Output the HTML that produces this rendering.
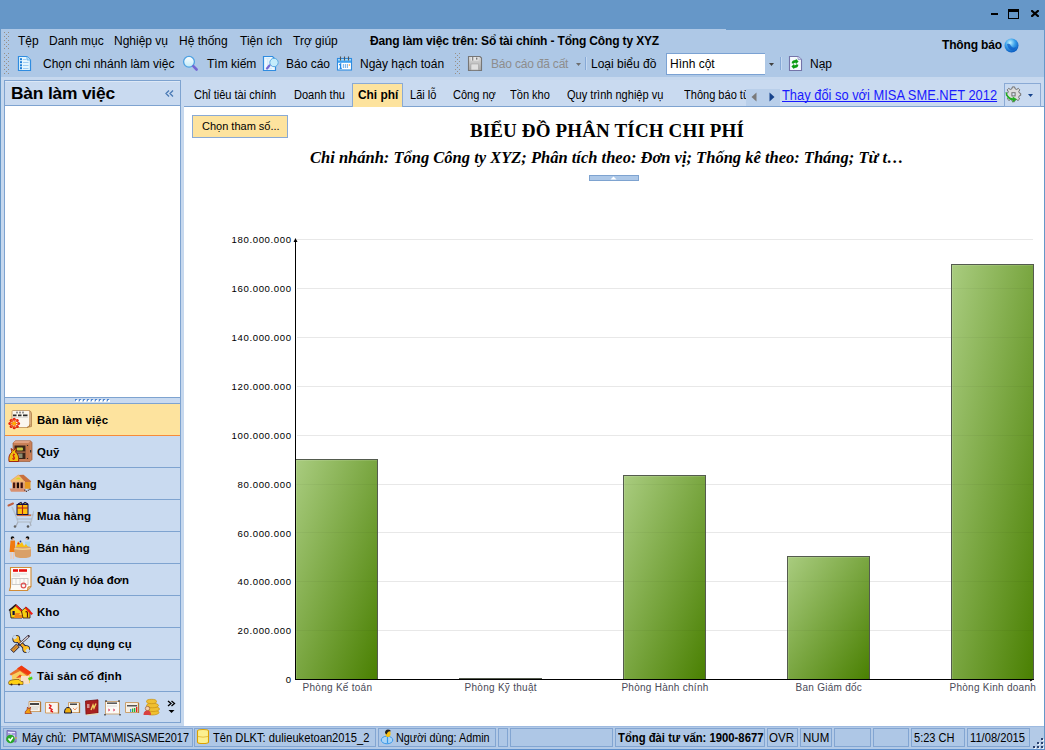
<!DOCTYPE html>
<html><head><meta charset="utf-8">
<style>
*{margin:0;padding:0;box-sizing:border-box}
html,body{width:1045px;height:750px;overflow:hidden;background:#6697c8;font-family:"Liberation Sans",sans-serif;color:#000}
.a{position:absolute;white-space:nowrap}
.t12{font-size:12px;line-height:14px}
.t11{font-size:11px;line-height:13px}
.b{font-weight:bold}
.nav{font-size:11.4px;line-height:13px;letter-spacing:0.12px;color:#000;margin-top:1px}
.ylab{font-size:9.6px;line-height:11px;letter-spacing:0.62px;color:#000}
.xlab{font-size:10px;line-height:12px;letter-spacing:0.27px;color:#4a4a58}
.bar{background:linear-gradient(to bottom right,#a9cc7f,#4a8002);border:1px solid #545b4e;box-shadow:inset 1px 1px 0 rgba(255,255,255,0.12)}
.sp{border:1px solid #82a5d2;background:#aec7e6}
.tab{font-size:12px;line-height:14px;top:88px;transform:scaleX(0.92);transform-origin:0 0}
</style></head><body>
<div class="a" style="left:0;top:0;width:1045px;height:750px;overflow:hidden">

<!-- title bar -->
<div class="a" style="left:0;top:0;width:1045px;height:30px;background:#6697c8"></div>
<div class="a" style="left:991px;top:13px;width:7px;height:2px;background:#000"></div>
<div class="a" style="left:1008px;top:9px;width:11px;height:10px;border:1px solid #000;border-top-width:3px"></div>
<svg class="a" style="left:1031px;top:10px" width="8" height="7" viewBox="0 0 8 7"><path d="M1.1 1 L6.9 6 M6.9 1 L1.1 6" stroke="#000" stroke-width="2.2" stroke-linecap="square"/></svg>

<!-- app frame -->
<div class="a" style="left:1px;top:29px;width:1043px;height:721px;background:#c6d8ee"></div>

<!-- menu/toolbar area -->
<div class="a" style="left:1px;top:29px;width:1043px;height:48px;background:#aec8e6"></div>

<!-- menu row -->
<div class="a" style="left:726px;top:29px;width:318px;height:1px;background:#6697c8"></div>
<svg class="a" style="left:0;top:0" width="12" height="80" viewBox="0 0 12 80"><g fill="#988f85"><rect x="4" y="32" width="1" height="1"/><rect x="8" y="32" width="1" height="1"/><rect x="4" y="36" width="1" height="1"/><rect x="8" y="36" width="1" height="1"/><rect x="4" y="40" width="1" height="1"/><rect x="8" y="40" width="1" height="1"/><rect x="4" y="44" width="1" height="1"/><rect x="8" y="44" width="1" height="1"/><rect x="4" y="48" width="1" height="1"/><rect x="8" y="48" width="1" height="1"/><rect x="4" y="53" width="1" height="1"/><rect x="8" y="53" width="1" height="1"/><rect x="4" y="57" width="1" height="1"/><rect x="8" y="57" width="1" height="1"/><rect x="4" y="61" width="1" height="1"/><rect x="8" y="61" width="1" height="1"/><rect x="4" y="65" width="1" height="1"/><rect x="8" y="65" width="1" height="1"/><rect x="4" y="69" width="1" height="1"/><rect x="8" y="69" width="1" height="1"/><rect x="4" y="73" width="1" height="1"/><rect x="8" y="73" width="1" height="1"/><rect x="6" y="34" width="1" height="1"/><rect x="6" y="38" width="1" height="1"/><rect x="6" y="42" width="1" height="1"/><rect x="6" y="46" width="1" height="1"/><rect x="6" y="55" width="1" height="1"/><rect x="6" y="59" width="1" height="1"/><rect x="6" y="63" width="1" height="1"/><rect x="6" y="67" width="1" height="1"/><rect x="6" y="71" width="1" height="1"/></g></svg>
<div class="a t12" style="left:18px;top:34px">Tệp</div>
<div class="a t12" style="left:49px;top:34px">Danh mục</div>
<div class="a t12" style="left:114px;top:34px">Nghiệp vụ</div>
<div class="a t12" style="left:179px;top:34px">Hệ thống</div>
<div class="a t12" style="left:240px;top:34px">Tiện ích</div>
<div class="a t12" style="left:293px;top:34px">Trợ giúp</div>
<div class="a t12 b" style="left:370px;top:34px;letter-spacing:-0.15px">Đang làm việc trên: Sổ tài chính - Tổng Công ty XYZ</div>
<div class="a t12 b" style="left:942px;top:38px;letter-spacing:-0.15px">Thông báo</div>
<svg class="a" style="left:1004px;top:38px" width="15" height="15" viewBox="0 0 15 15">
<defs><radialGradient id="gl" cx="0.4" cy="0.3" r="0.7"><stop offset="0" stop-color="#bff0ff"/><stop offset="0.5" stop-color="#3aa0ea"/><stop offset="1" stop-color="#0a5cc0"/></radialGradient></defs>
<circle cx="7.5" cy="7.5" r="7" fill="url(#gl)"/><path d="M3 6 Q6 5 7 8 Q9 11 12 9 Q11 13 7 12 Q4 11 3 6Z" fill="#1060c8" opacity="0.8"/></svg>

<!-- toolbar row -->
<div class="a t12" style="left:43px;top:57px">Chọn chi nhánh làm việc</div>
<div class="a t12" style="left:207px;top:57px">Tìm kiếm</div>
<div class="a t12" style="left:286px;top:57px">Báo cáo</div>
<div class="a t12" style="left:360px;top:57px">Ngày hạch toán</div>
<div class="a t12" style="left:491px;top:57px;color:#8d8d8d;letter-spacing:-0.2px">Báo cáo đã cất</div>
<div class="a t12" style="left:591px;top:57px">Loại biểu đồ</div>
<div class="a" style="left:666px;top:53px;width:99px;height:22px;background:#fff;border:1px solid #7ba2d3;border-right:none"></div>
<div class="a t12" style="left:670px;top:57px">Hình cột</div>
<div class="a t12" style="left:810px;top:57px">Nạp</div>
<svg class="a" style="left:576px;top:63px" width="6" height="3" viewBox="0 0 6 3"><path d="M0 0H5L2.5 3Z" fill="#6d6d6d"/></svg>
<svg class="a" style="left:769px;top:63px" width="6" height="3" viewBox="0 0 6 3"><path d="M0 0H5L2.5 3Z" fill="#404040"/></svg>
<div class="a" style="left:585px;top:57px;width:1px;height:13px;background:#86a9d6"></div><div class="a" style="left:586px;top:57px;width:1px;height:13px;background:#c4d8f0"></div>
<div class="a" style="left:780px;top:57px;width:1px;height:13px;background:#86a9d6"></div><div class="a" style="left:781px;top:57px;width:1px;height:13px;background:#c4d8f0"></div>
<svg class="a" style="left:455px;top:53px" width="5" height="21" viewBox="0 0 5 21"><g fill="#988f85"><rect x="0" y="0" width="1" height="1"/><rect x="4" y="0" width="1" height="1"/><rect x="0" y="4" width="1" height="1"/><rect x="4" y="4" width="1" height="1"/><rect x="0" y="8" width="1" height="1"/><rect x="4" y="8" width="1" height="1"/><rect x="0" y="12" width="1" height="1"/><rect x="4" y="12" width="1" height="1"/><rect x="0" y="16" width="1" height="1"/><rect x="4" y="16" width="1" height="1"/><rect x="0" y="20" width="1" height="1"/><rect x="4" y="20" width="1" height="1"/><rect x="2" y="2" width="1" height="1"/><rect x="2" y="6" width="1" height="1"/><rect x="2" y="10" width="1" height="1"/><rect x="2" y="14" width="1" height="1"/><rect x="2" y="18" width="1" height="1"/></g></svg>

<!-- left panel -->
<div class="a" style="left:4px;top:80px;width:177px;height:643px;border:1px solid #7ea3d0;background:#c9daf0"></div>
<div class="a" style="left:5px;top:81px;width:175px;height:1px;background:#dde8f6"></div>
<div class="a b" style="left:11px;top:83px;font-size:17.4px;line-height:20px;letter-spacing:-0.2px">Bàn làm việc</div>
<svg class="a" style="left:165px;top:90px" width="9" height="7" viewBox="0 0 9 7"><path d="M4 0.5L1 3.5L4 6.5M8 0.5L5 3.5L8 6.5" fill="none" stroke="#4a7ab5" stroke-width="1.3"/></svg>
<div class="a" style="left:5px;top:105px;width:175px;height:1px;background:#7ea3d0"></div>
<div class="a" style="left:5px;top:106px;width:175px;height:291px;background:#fff"></div>
<div class="a" style="left:5px;top:397px;width:175px;height:1px;background:#7ea3d0"></div>
<svg class="a" style="left:75px;top:399px" width="38" height="3" viewBox="0 0 38 3"><g fill="#ffffff"><rect x="1" y="1" width="2" height="2"/><rect x="5" y="1" width="2" height="2"/><rect x="9" y="1" width="2" height="2"/><rect x="13" y="1" width="2" height="2"/><rect x="17" y="1" width="2" height="2"/><rect x="21" y="1" width="2" height="2"/><rect x="25" y="1" width="2" height="2"/><rect x="29" y="1" width="2" height="2"/><rect x="33" y="1" width="2" height="2"/></g><g fill="#4f86d0"><path d="M0 0H2V1H1V2H0Z"/><path d="M4 0H6V1H5V2H4Z"/><path d="M8 0H10V1H9V2H8Z"/><path d="M12 0H14V1H13V2H12Z"/><path d="M16 0H18V1H17V2H16Z"/><path d="M20 0H22V1H21V2H20Z"/><path d="M24 0H26V1H25V2H24Z"/><path d="M28 0H30V1H29V2H28Z"/><path d="M32 0H34V1H33V2H32Z"/></g></svg>
<div class="a" style="left:5px;top:403px;width:175px;height:1px;background:#7ea3d0"></div>
<div class="a" style="left:5px;top:404px;width:175px;height:31px;background:#fde39e"></div>
<div class="a" style="left:5px;top:435px;width:175px;height:1px;background:#f68b3a"></div>
<div class="a" style="left:5px;top:467px;width:175px;height:1px;background:#7ea3d0"></div>
<div class="a" style="left:5px;top:499px;width:175px;height:1px;background:#7ea3d0"></div>
<div class="a" style="left:5px;top:531px;width:175px;height:1px;background:#7ea3d0"></div>
<div class="a" style="left:5px;top:563px;width:175px;height:1px;background:#7ea3d0"></div>
<div class="a" style="left:5px;top:595px;width:175px;height:1px;background:#7ea3d0"></div>
<div class="a" style="left:5px;top:627px;width:175px;height:1px;background:#7ea3d0"></div>
<div class="a" style="left:5px;top:659px;width:175px;height:1px;background:#7ea3d0"></div>
<div class="a" style="left:5px;top:691px;width:175px;height:1px;background:#7ea3d0"></div>
<div class="a b nav" style="left:37px;top:413px">Bàn làm việc</div>
<div class="a b nav" style="left:37px;top:445px">Quỹ</div>
<div class="a b nav" style="left:37px;top:477px">Ngân hàng</div>
<div class="a b nav" style="left:37px;top:509px">Mua hàng</div>
<div class="a b nav" style="left:37px;top:541px">Bán hàng</div>
<div class="a b nav" style="left:37px;top:573px">Quản lý hóa đơn</div>
<div class="a b nav" style="left:37px;top:605px">Kho</div>
<div class="a b nav" style="left:37px;top:637px">Công cụ dụng cụ</div>
<div class="a b nav" style="left:37px;top:669px">Tài sản cố định</div>

<!-- tabs strip -->
<div class="a" style="left:181px;top:80px;width:863px;height:27px;background:#c9daf0"></div>
<div class="a" style="left:184px;top:106px;width:860px;height:1px;background:#7ea3d0"></div>
<div class="a" style="left:184px;top:107px;width:860px;height:619px;background:#fff"></div>
<div class="a" style="left:1044px;top:29px;width:1px;height:721px;background:#6697c8"></div>
<div class="a" style="left:352px;top:83px;width:51px;height:24px;background:#fde39e;border:1px solid #8aaad5;border-bottom:none"></div>
<div class="a tab" style="left:194px">Chỉ tiêu tài chính</div>
<div class="a tab" style="left:294px">Doanh thu</div>
<div class="a tab b" style="left:358px;transform:scaleX(0.99)">Chi phí</div>
<div class="a tab" style="left:410px">Lãi lỗ</div>
<div class="a tab" style="left:453px">Công nợ</div>
<div class="a tab" style="left:510px">Tồn kho</div>
<div class="a tab" style="left:567px">Quy trình nghiệp vụ</div>
<div class="a" style="left:683px;top:86px;width:63px;height:18px;overflow:hidden"><div class="a tab" style="left:1px;top:2px">Thông báo từ MISA</div></div>
<div class="a" style="left:746px;top:89px;width:34px;height:17px;background:#b9cfea"></div>
<svg class="a" style="left:751px;top:92px" width="6" height="10" viewBox="0 0 6 10"><path d="M5.5 0.5V9.5L0.5 5Z" fill="#7a7a7a"/></svg>
<svg class="a" style="left:769px;top:92px" width="6" height="10" viewBox="0 0 6 10"><path d="M0.5 0.5V9.5L5.5 5Z" fill="#15428b"/></svg>
<div class="a" style="left:782px;top:87px;font-size:14px;line-height:16px;color:#1a1aff;text-decoration:underline;text-decoration-skip-ink:none;transform:scaleX(0.92);transform-origin:0 0">Thay đổi so với MISA SME.NET 2012</div>
<div class="a" style="left:1004px;top:83px;width:37px;height:24px;border:1px solid #8aaad5;background:#c9daf0"></div>
<svg class="a" style="left:1028px;top:94px" width="6" height="3" viewBox="0 0 6 3"><path d="M0 0H5L2.5 3Z" fill="#15428b"/></svg>

<!-- status bar -->
<div class="a" style="left:1px;top:726px;width:1043px;height:24px;background:#b3cae7;border-top:1px solid #9ebae0"></div>
<div class="a" style="left:0;top:749px;width:1045px;height:1px;background:#5d8fcc"></div>

<!-- content -->
<div class="a" style="left:192px;top:115px;width:96px;height:23px;background:#fde39e;border:1px solid #8aaad5"></div>
<div class="a t11" style="left:202px;top:120px">Chọn tham số...</div>
<div class="a b" style="left:469px;top:121px;font-family:'Liberation Serif',serif;font-size:19px;line-height:20px;width:276px;text-align:center;letter-spacing:0.15px">BIỂU ĐỒ PHÂN TÍCH CHI PHÍ</div>
<div class="a b" style="left:310px;top:147.5px;font-family:'Liberation Serif',serif;font-style:italic;font-size:16.5px;line-height:20px">Chi nhánh: Tổng Công ty XYZ; Phân tích theo: Đơn vị; Thống kê theo: Tháng; Từ t…</div>
<div class="a" style="left:589px;top:175px;width:50px;height:6px;background:#adc8e8;border:1px solid #7ea3d0"></div>
<svg class="a" style="left:610px;top:176px" width="7" height="4" viewBox="0 0 7 4"><path d="M0.5 3.5L3.5 0.5L6.5 3.5Z" fill="#fff"/></svg>
<!--CHART-->
<div class="a" style="left:297px;top:630px;width:736px;height:1px;background:#e8e8e8"></div>
<div class="a" style="left:297px;top:581px;width:736px;height:1px;background:#e8e8e8"></div>
<div class="a" style="left:297px;top:532px;width:736px;height:1px;background:#e8e8e8"></div>
<div class="a" style="left:297px;top:484px;width:736px;height:1px;background:#e8e8e8"></div>
<div class="a" style="left:297px;top:435px;width:736px;height:1px;background:#e8e8e8"></div>
<div class="a" style="left:297px;top:386px;width:736px;height:1px;background:#e8e8e8"></div>
<div class="a" style="left:297px;top:337px;width:736px;height:1px;background:#e8e8e8"></div>
<div class="a" style="left:297px;top:288px;width:736px;height:1px;background:#e8e8e8"></div>
<div class="a" style="left:297px;top:239px;width:736px;height:1px;background:#e8e8e8"></div>
<div class="a ylab" style="right:753.3px;top:674.0px">0</div>
<div class="a ylab" style="right:753.3px;top:625.2px">20.000.000</div>
<div class="a ylab" style="right:753.3px;top:576.3px">40.000.000</div>
<div class="a ylab" style="right:753.3px;top:527.5px">60.000.000</div>
<div class="a ylab" style="right:753.3px;top:478.6px">80.000.000</div>
<div class="a ylab" style="right:753.3px;top:429.8px">100.000.000</div>
<div class="a ylab" style="right:753.3px;top:380.9px">120.000.000</div>
<div class="a ylab" style="right:753.3px;top:332.1px">140.000.000</div>
<div class="a ylab" style="right:753.3px;top:283.2px">160.000.000</div>
<div class="a ylab" style="right:753.3px;top:234.4px">180.000.000</div>
<div class="a bar" style="left:295px;top:459px;width:83px;height:221px"></div>
<div class="a bar" style="left:459px;top:678px;width:83px;height:2px"></div>
<div class="a bar" style="left:623px;top:475px;width:83px;height:205px"></div>
<div class="a bar" style="left:787px;top:556px;width:83px;height:124px"></div>
<div class="a bar" style="left:951px;top:264px;width:83px;height:416px"></div>
<div class="a" style="left:296px;top:630px;width:81px;height:1px;background:rgba(0,0,0,0.035)"></div>
<div class="a" style="left:624px;top:630px;width:81px;height:1px;background:rgba(0,0,0,0.035)"></div>
<div class="a" style="left:788px;top:630px;width:81px;height:1px;background:rgba(0,0,0,0.035)"></div>
<div class="a" style="left:952px;top:630px;width:81px;height:1px;background:rgba(0,0,0,0.035)"></div>
<div class="a" style="left:296px;top:581px;width:81px;height:1px;background:rgba(0,0,0,0.035)"></div>
<div class="a" style="left:624px;top:581px;width:81px;height:1px;background:rgba(0,0,0,0.035)"></div>
<div class="a" style="left:788px;top:581px;width:81px;height:1px;background:rgba(0,0,0,0.035)"></div>
<div class="a" style="left:952px;top:581px;width:81px;height:1px;background:rgba(0,0,0,0.035)"></div>
<div class="a" style="left:296px;top:532px;width:81px;height:1px;background:rgba(0,0,0,0.035)"></div>
<div class="a" style="left:624px;top:532px;width:81px;height:1px;background:rgba(0,0,0,0.035)"></div>
<div class="a" style="left:952px;top:532px;width:81px;height:1px;background:rgba(0,0,0,0.035)"></div>
<div class="a" style="left:296px;top:484px;width:81px;height:1px;background:rgba(0,0,0,0.035)"></div>
<div class="a" style="left:624px;top:484px;width:81px;height:1px;background:rgba(0,0,0,0.035)"></div>
<div class="a" style="left:952px;top:484px;width:81px;height:1px;background:rgba(0,0,0,0.035)"></div>
<div class="a" style="left:952px;top:435px;width:81px;height:1px;background:rgba(0,0,0,0.035)"></div>
<div class="a" style="left:952px;top:386px;width:81px;height:1px;background:rgba(0,0,0,0.035)"></div>
<div class="a" style="left:952px;top:337px;width:81px;height:1px;background:rgba(0,0,0,0.035)"></div>
<div class="a" style="left:952px;top:288px;width:81px;height:1px;background:rgba(0,0,0,0.035)"></div>
<div class="a" style="left:295px;top:240px;width:1px;height:440px;background:#000"></div>
<svg class="a" style="left:293px;top:238px" width="5" height="4" viewBox="0 0 5 4"><path d="M2.5 0L4.5 4H0.5Z" fill="#000"/></svg>
<div class="a" style="left:295px;top:679px;width:739px;height:1px;background:#000"></div>
<svg class="a" style="left:1029px;top:679px" width="6" height="4" viewBox="0 0 6 4"><path d="M0.5 0H4.8L1.5 2.6Z" fill="#000"/></svg>
<div class="a xlab" style="left:302.6px;top:682px">Phòng Kế toán</div>
<div class="a xlab" style="left:464.6px;top:682px">Phòng Kỹ thuật</div>
<div class="a xlab" style="left:621.4px;top:682px">Phòng Hành chính</div>
<div class="a xlab" style="left:795.5px;top:682px">Ban Giám đốc</div>
<div class="a xlab" style="left:949.5px;top:682px">Phòng Kinh doanh</div>
<!--/CHART-->
<!-- status panels -->
<div class="a sp" style="left:3px;top:728px;width:190px;height:19px"></div>
<div class="a sp" style="left:194px;top:728px;width:182px;height:19px"></div>
<div class="a sp" style="left:378px;top:728px;width:118px;height:19px"></div>
<div class="a sp" style="left:498px;top:728px;width:10px;height:19px"></div>
<div class="a sp" style="left:510px;top:728px;width:103px;height:19px"></div>
<div class="a sp" style="left:615px;top:728px;width:150px;height:19px"></div>
<div class="a sp" style="left:767px;top:728px;width:31px;height:19px"></div>
<div class="a sp" style="left:800px;top:728px;width:32px;height:19px"></div>
<div class="a sp" style="left:834px;top:728px;width:37px;height:19px"></div>
<div class="a sp" style="left:873px;top:728px;width:36px;height:19px"></div>
<div class="a sp" style="left:911px;top:728px;width:54px;height:19px"></div>
<div class="a sp" style="left:967px;top:728px;width:63px;height:19px"></div>
<div class="a t11" style="left:22px;top:731px;font-size:12px;line-height:14px;transform:scaleX(0.912);transform-origin:0 0">Máy chủ:&nbsp; PMTAM\MISASME2017</div>
<div class="a t11" style="left:213px;top:731px;font-size:12px;line-height:14px;transform:scaleX(0.93);transform-origin:0 0">Tên DLKT: dulieuketoan2015_2</div>
<div class="a t11" style="left:396px;top:731px;font-size:12px;line-height:14px;transform:scaleX(0.9);transform-origin:0 0">Người dùng: Admin</div>
<div class="a t11 b" style="left:618px;top:731px;font-size:12px;line-height:14px;transform:scaleX(0.94);transform-origin:0 0">Tổng đài tư vấn: 1900-8677</div>
<div class="a t11" style="left:769px;top:731px;font-size:12px;line-height:14px;transform:scaleX(0.96);transform-origin:0 0">OVR</div>
<div class="a t11" style="left:803px;top:731px;font-size:12px;line-height:14px;transform:scaleX(0.96);transform-origin:0 0">NUM</div>
<div class="a t11" style="left:914px;top:731px;font-size:12px;line-height:14px;transform:scaleX(0.92);transform-origin:0 0">5:23 CH</div>
<div class="a t11" style="left:970px;top:731px;font-size:12px;line-height:14px;transform:scaleX(0.93);transform-origin:0 0">11/08/2015</div>

<svg class="a" style="left:1032px;top:737px" width="12" height="12" viewBox="0 0 12 12"><g fill="#fff" opacity="0.7"><rect x="10" y="2" width="2" height="2"/><rect x="6" y="6" width="2" height="2"/><rect x="10" y="6" width="2" height="2"/><rect x="2" y="10" width="2" height="2"/><rect x="6" y="10" width="2" height="2"/><rect x="10" y="10" width="2" height="2"/></g><g fill="#2c4270"><rect x="9" y="1" width="2" height="2"/><rect x="5" y="5" width="2" height="2"/><rect x="9" y="5" width="2" height="2"/><rect x="1" y="9" width="2" height="2"/><rect x="5" y="9" width="2" height="2"/><rect x="9" y="9" width="2" height="2"/></g></svg>
<!--ICONS-->
<svg class="a" style="left:17px;top:55px" width="15" height="17" viewBox="0 0 15 17"><path d="M1.5 1.5H10L13.5 5V15.5H1.5Z" fill="#e4f6fe" stroke="#2f8ce0" stroke-width="1.2"/>
<path d="M10 1.5V5H13.5" fill="#bfe6fa" stroke="#58a8e8" stroke-width="0.8"/>
<rect x="3" y="3.2" width="2" height="2" fill="#1f7fd8"/><rect x="3" y="6.2" width="2" height="2" fill="#1f7fd8"/>
<rect x="3" y="9.3" width="2" height="2" fill="#1f7fd8"/><rect x="3" y="12.2" width="2" height="2" fill="#1f7fd8"/>
<rect x="6" y="4" width="3" height="0.8" fill="#8cc4f0"/><rect x="6" y="7" width="5.5" height="0.8" fill="#8cc4f0"/>
<rect x="6" y="10.2" width="5.5" height="0.8" fill="#8cc4f0"/><rect x="6" y="13" width="5.5" height="0.8" fill="#8cc4f0"/></svg>
<svg class="a" style="left:182px;top:55px" width="17" height="17" viewBox="0 0 17 17"><defs><linearGradient id="sg" x1="0" y1="0" x2="0" y2="1"><stop offset="0" stop-color="#ffffff"/><stop offset="1" stop-color="#bfeaf8"/></linearGradient></defs>
<circle cx="7" cy="6.8" r="5.4" fill="url(#sg)" stroke="#4ea2e2" stroke-width="1.3"/>
<path d="M11.3 11.2L14.6 14.5" stroke="#7466d4" stroke-width="2.6" stroke-linecap="round"/></svg>
<svg class="a" style="left:262px;top:55px" width="18" height="17" viewBox="0 0 18 17"><path d="M1.5 1.5H10.5L13.5 4.5V15.5H1.5Z" fill="#eef8fe" stroke="#2f8ce0" stroke-width="1.2"/>
<path d="M3.5 3.5H8M5.7 3.5V13.5M3.5 13.5H10" stroke="#d6ecfb" stroke-width="1.5"/>
<circle cx="12" cy="7.5" r="4.2" fill="#c4ecfb" stroke="#5aa8e0" stroke-width="1"/>
<path d="M7.5 10.5L5 13.5" stroke="#7466d4" stroke-width="2.2" stroke-linecap="round"/></svg>
<svg class="a" style="left:336px;top:56px" width="17" height="15" viewBox="0 0 17 15"><rect x="1.5" y="2.5" width="14" height="11.5" fill="#ffffff" stroke="#2f8ce0" stroke-width="1.1"/>
<rect x="2" y="3" width="13" height="3.8" fill="#3da0f0"/><rect x="2" y="3" width="13" height="1.5" fill="#a8dcfc"/>
<path d="M4.5 0.5V4.5M8.5 0.5V4.5M12.5 0.5V4.5" stroke="#555" stroke-width="1.1"/>
<path d="M3.2 9L4.6 8V12.3M3.5 12.3H5.8" stroke="#1f88e8" stroke-width="1.3" fill="none"/>
<g fill="#3a8ee0"><circle cx="7.4" cy="9" r="0.7"/><circle cx="9.4" cy="9" r="0.7"/><circle cx="11.4" cy="9" r="0.7"/><circle cx="7.4" cy="11" r="0.7"/><circle cx="9.4" cy="11" r="0.7"/><circle cx="11.4" cy="11" r="0.7"/></g>
<circle cx="13.4" cy="9" r="0.8" fill="#f49a30"/></svg>
<svg class="a" style="left:467px;top:55px" width="16" height="17" viewBox="0 0 16 17"><defs><linearGradient id="fg" x1="0" y1="0" x2="0" y2="1"><stop offset="0" stop-color="#dcdcdc"/><stop offset="1" stop-color="#a8a8a8"/></linearGradient></defs>
<path d="M1.5 1.5H13L14.5 3V15.5H1.5Z" fill="url(#fg)" stroke="#767676" stroke-width="1.1"/>
<rect x="4" y="2" width="7.5" height="3.6" fill="#e6e6e6"/><rect x="5" y="2" width="1.3" height="3.6" fill="#8a8a8a"/><rect x="9" y="2.6" width="1.4" height="2" fill="#777"/>
<rect x="4" y="9" width="7.5" height="6" fill="#e0e0e0" stroke="#9a9a9a" stroke-width="0.5"/></svg>
<svg class="a" style="left:788px;top:55px" width="15" height="17" viewBox="0 0 15 17"><path d="M1.5 1.5H10L13.5 4.5V15.5H1.5Z" fill="#f6faff" stroke="#7474a8" stroke-width="1.1"/>
<path d="M10 1.5V4.5H13.5" fill="#d0d8f4" stroke="#9090c0" stroke-width="0.7"/>
<path d="M3.6 8.2Q4 4.8 7.8 4.9V3.8L10.6 6.6L7.8 9.2V7.8Q6 7.6 5.6 8.8Z" fill="#0c9c14"/>
<path d="M10.4 9.8Q10 13.2 6.2 13.1V14.2L3.4 11.4L6.2 8.8V10.2Q8 10.4 8.4 9.2Z" fill="#0c9c14"/></svg>
<svg class="a" style="left:1004px;top:85px" width="20" height="18" viewBox="0 0 20 18"><g transform="translate(9.5,9.3)"><path d="M-1.3 -7.2H1.3L1.7 -5.2L3.6 -4.4L5.3 -5.6L7 -3.9L5.8 -2.2L6.6 -0.3L8 0V2.3L6.4 2.6L5.7 4.5L6.8 6.2L5 7.9L3.4 6.8L1.4 7.6L1.1 9.3H-1.2L-1.5 7.6L-3.5 6.8L-5 7.9L-6.8 6.2L-5.7 4.5L-6.5 2.6L-8 2.3V0L-6.5 -0.3L-5.8 -2.2L-7 -3.9L-5.3 -5.6L-3.6 -4.4L-1.7 -5.2Z" transform="scale(0.9) translate(0,-1)" fill="#dcdcdc" stroke="#6e6e6e" stroke-width="1.1"/>
<rect x="-1.6" y="-1.6" width="3.2" height="3.2" fill="#dbe8f8" stroke="#707070" stroke-width="1"/></g>
<path d="M1.5 7Q1.8 14 9 15.5L8.3 17.5L13 14.3L8.6 11.5L8.8 13.3Q4 12.5 2.6 7.2Z" fill="#22b022"/></svg>
<svg class="a" style="left:6px;top:405px" width="28" height="28" viewBox="0 0 28 28"><path d="M6 6.5Q6 5.5 7 5.5H23L24.5 7V21L21 22.5H9L6 21Z" fill="#fbf6ee" stroke="#c9a06a" stroke-width="1"/>
<path d="M23 5.5Q25.5 6 25.5 9V21.5L23 22" fill="#d8b080" stroke="#b0804a" stroke-width="0.8"/>
<path d="M7 10.3H10.5M12 10.3H15.5M17 10.3H21.5" stroke="#2a2a2a" stroke-width="1.8"/><path d="M10 7.8H12M13 7.8H15M16 7.8H18" stroke="#666" stroke-width="1"/><rect x="7" y="12.3" width="15" height="0.6" fill="#ccc"/><path d="M21 22.5Q23.5 22 24 19.5" stroke="#b07838" stroke-width="1.2" fill="none"/>
<path d="M11 5V7.5M14 5V7.5M17 5V7.5" stroke="#999" stroke-width="0.8"/>
<g fill="#e41c0c"><circle cx="12.50" cy="18.50" r="1.55"/><circle cx="11.24" cy="21.54" r="1.55"/><circle cx="8.20" cy="22.80" r="1.55"/><circle cx="5.16" cy="21.54" r="1.55"/><circle cx="3.90" cy="18.50" r="1.55"/><circle cx="5.16" cy="15.46" r="1.55"/><circle cx="8.20" cy="14.20" r="1.55"/><circle cx="11.24" cy="15.46" r="1.55"/></g><path d="M8.20 18.50L12.50 18.50 M8.20 18.50L11.24 21.54 M8.20 18.50L8.20 22.80 M8.20 18.50L5.16 21.54 M8.20 18.50L3.90 18.50 M8.20 18.50L5.16 15.46 M8.20 18.50L8.20 14.20 M8.20 18.50L11.24 15.46" stroke="#f46a20" stroke-width="1.1"/><circle cx="8.2" cy="18.5" r="1.8" fill="#ffb000"/></svg>
<svg class="a" style="left:6px;top:437px" width="28" height="28" viewBox="0 0 28 28"><path d="M7 6L9.5 3.8H24.5L26 5.5V22.5L24 24.5H7.5Z" fill="#c98058" stroke="#9a5a38" stroke-width="0.7"/>
<path d="M7 6L9.5 3.8H24.5L22.5 6Z" fill="#e0a080"/>
<rect x="8.5" y="8.5" width="11" height="13.5" fill="#3a2418"/>
<rect x="8.5" y="14.5" width="11" height="1.2" fill="#c07850"/>
<rect x="10.5" y="10.5" width="6.5" height="3" rx="1" fill="#c8c840"/><rect x="11.5" y="16.5" width="5" height="4.5" fill="#8a8a70"/>
<rect x="20" y="7.5" width="3.5" height="15" fill="#c27448"/><circle cx="21.5" cy="8.5" r="0.6" fill="#222"/><circle cx="21.5" cy="21.5" r="0.6" fill="#222"/><rect x="24" y="13" width="1.2" height="2.5" fill="#333"/>
<path d="M5 11.5L7.5 13.5L10.5 11L9.5 15Q13.5 18 12.5 24.5H3Q2 18 6 15Z" fill="#f0c010" stroke="#9a1a08" stroke-width="0.9"/>
<path d="M9 17.5Q6.5 17 7 19Q9.5 20 8.5 22Q7 22.5 6 21.5M7.7 16.5V23" stroke="#d02010" stroke-width="0.9" fill="none"/></svg>
<svg class="a" style="left:6px;top:469px" width="28" height="28" viewBox="0 0 28 28"><path d="M12.5 6L17.5 5.8L25.2 12.3L24.5 13.2H19Z" fill="#c8703e"/>
<path d="M4.8 11.6L12.5 5.8L19 13.2H5.5Z" fill="#f4c070" stroke="#e8a060" stroke-width="0.6"/>
<path d="M9.5 10.2Q12.5 7 15 10.2Z" fill="#d8d820"/>
<rect x="19" y="13" width="5.5" height="6.8" fill="#e89a20"/>
<rect x="5.5" y="12.2" width="13.5" height="1.3" fill="#f0b478"/>
<rect x="6" y="13.5" width="13" height="6.2" fill="#e0a070"/>
<rect x="7" y="13.5" width="2.2" height="5.8" fill="#4a1a10"/><rect x="10.8" y="13.5" width="2.2" height="5.8" fill="#1a0808"/><rect x="14.6" y="13.5" width="2.2" height="5.8" fill="#3a1010"/>
<path d="M3.5 19.5H18.5L20 22.8H5Z" fill="#d89070"/>
<path d="M18.5 20.8L20.5 22.3L22.5 21L24.5 20.2" stroke="#3a2020" stroke-width="1.3" stroke-dasharray="1 1" fill="none"/></svg>
<svg class="a" style="left:6px;top:501px" width="28" height="28" viewBox="0 0 28 28"><path d="M2.5 4.5L7 2.5" stroke="#c06040" stroke-width="2" stroke-linecap="round"/>
<path d="M6 6L10 15L12 21H25L28 10" stroke="#b8c4d0" stroke-width="1.6" fill="none"/>
<path d="M9 14H27M11 18H26M12 21L10 25M24 21L25 25" stroke="#a8b0bc" stroke-width="1.2" fill="none"/>
<rect x="11" y="13.5" width="14" height="1.6" fill="#d07040"/>
<rect x="11" y="3.5" width="11" height="10" fill="#ffc010" stroke="#10104a" stroke-width="1"/>
<path d="M16.5 3.5V13.5M11 7H22" stroke="#b02010" stroke-width="1.1"/>
<path d="M12 3L15 1.5L16.5 3.5L19 1.5L22 3" stroke="#10104a" stroke-width="1.2" fill="#f0d020"/>
<circle cx="9" cy="25.5" r="1.3" fill="#666"/><circle cx="22" cy="25.5" r="1.3" fill="#555"/></svg>
<svg class="a" style="left:6px;top:533px" width="28" height="28" viewBox="0 0 28 28"><circle cx="6.5" cy="5" r="1.8" fill="#111"/><circle cx="7.2" cy="6" r="1" fill="#f4c8b0"/><circle cx="21.5" cy="5" r="1.8" fill="#111"/><circle cx="20.8" cy="6" r="1" fill="#f4c8b0"/>
<path d="M4.5 7.5H9L9.5 19H3.5Z" fill="#f07a10"/>
<path d="M5 19V26M7.5 19V26" stroke="#f0c8b0" stroke-width="1.2"/>
<path d="M19 8.5H24L24 15H19Z" fill="#a8d4ec"/><rect x="19" y="14" width="4.5" height="2.5" fill="#222"/>
<path d="M8 16Q9 13 18 13Q26 13 25 16V23Q24 25 17 25Q10 25 9 23Z" fill="#d9a068"/>
<path d="M8.5 15.5Q17 17 25 15.5" stroke="#f0d090" stroke-width="1.6" fill="none"/>
<path d="M10 14L12 8L14 11L16 9L18 13L20 11L22 14Z" fill="#f8c010"/>
<circle cx="12.5" cy="10.5" r="1" fill="#d02020"/><circle cx="14.5" cy="8.5" r="0.9" fill="#2a3a8a"/></svg>
<svg class="a" style="left:6px;top:565px" width="28" height="28" viewBox="0 0 28 28"><path d="M4.5 2.5H25V21.5L21.5 25.5H3.5L4.5 22Z" fill="#fdfbf6" stroke="#d08c38" stroke-width="1.1"/>
<rect x="7" y="4.2" width="5" height="2.6" fill="#e81010"/><rect x="13" y="4.2" width="8" height="2.6" fill="#e81010"/>
<path d="M6.5 9H21M6.5 11H14" stroke="#c8c8c8" stroke-width="0.7"/>
<rect x="6" y="13.5" width="16" height="6" fill="none" stroke="#c0c0c0" stroke-width="0.8"/>
<path d="M10 13.5V19.5M14 13.5V19.5M18 13.5V19.5" stroke="#c8c8c8" stroke-width="0.6"/>
<circle cx="17.5" cy="20.5" r="2.3" fill="none" stroke="#e05050" stroke-width="1.2"/>
<path d="M21.5 25.5L22 22L25 21.5" fill="#e8c090" stroke="#c88030" stroke-width="0.9"/></svg>
<svg class="a" style="left:6px;top:597px" width="28" height="28" viewBox="0 0 28 28"><path d="M4 14Q4 11 6 12L10.5 8L16 13V21H5Z" fill="#f8d010" stroke="#201010" stroke-width="0.8"/>
<path d="M10 7.5L17.5 14.5L16 15.5L9.5 9.5Z" fill="#e81818"/>
<path d="M3 13.5L10 7.5" stroke="#201010" stroke-width="1.2"/>
<rect x="6.5" y="14" width="2.2" height="4" fill="#101040"/>
<path d="M9.5 16H22V21H8Z" fill="#f08818"/><path d="M13 18L15 15L17 18Z" fill="#ffcc40"/>
<path d="M15.5 14L20 10L24 13.5V21H17Z" fill="#f8d010" stroke="#301010" stroke-width="0.8"/>
<path d="M19.5 9.5L27 16.5L25.5 18L19 11.5Z" fill="#f01c10"/>
<path d="M19.5 15Q21.5 14 21.5 16V20.5" stroke="#5a1008" stroke-width="1.2" fill="none"/></svg>
<svg class="a" style="left:6px;top:629px" width="28" height="28" viewBox="0 0 28 28"><path d="M10.5 10.2L20 19.8" stroke="#1a1a3a" stroke-width="4.2" stroke-linecap="round"/>
<circle cx="10.3" cy="9.9" r="3.9" fill="#1a1a3a"/><circle cx="20.2" cy="20.1" r="3.9" fill="#1a1a3a"/>
<path d="M10.5 10.2L20 19.8" stroke="#f4a820" stroke-width="2.6" stroke-linecap="round"/>
<circle cx="10.3" cy="9.9" r="3.1" fill="#ffc020"/><circle cx="20.2" cy="20.1" r="3.1" fill="#ffc020"/>
<path d="M6.2 8.2L9.2 5.6L11.2 8.4L8.6 10.8Z" fill="#c9daf0"/>
<path d="M24.2 21.8L21.2 24.4L19.2 21.6L21.8 19.2Z" fill="#c9daf0"/>
<path d="M13.2 15.6L22.6 7.2" stroke="#2a1a2a" stroke-width="2.4" stroke-linecap="round"/>
<path d="M13.6 15.2L22.3 7.5" stroke="#f0e8e8" stroke-width="1.1"/>
<path d="M4.8 20.6L10.4 15L13.3 17.9L7.7 23.5Z" fill="#d89030" stroke="#1a1a3a" stroke-width="0.9"/>
<path d="M7.5 20.5L11 17" stroke="#b87020" stroke-width="0.7"/></svg>
<svg class="a" style="left:6px;top:661px" width="28" height="28" viewBox="0 0 28 28"><path d="M6 14L8 10H19L24 14V22H6Z" fill="#f8d060"/>
<path d="M3.5 13L15.5 5L25.5 12L21 15L14 10L5 14.5Z" fill="#e87028"/>
<path d="M11 7.5L15.5 4.5L25.5 11.5L22 14Z" fill="#f03a10"/>
<path d="M10 17L14 13.5L17.5 16Z" fill="#f04a20"/>
<rect x="15" y="15" width="8" height="8" fill="#f8e0c8"/>
<path d="M22 17L26 15.5L26.5 18L23 19.5Z" fill="#50d010"/>
<path d="M2.5 21.5Q3 19 6 19L9 18.5H13L15 20.5H17V23.5H3Z" fill="#ffd010" stroke="#6a4010" stroke-width="0.6"/>
<circle cx="5.5" cy="23.5" r="1.1" fill="#402010"/><circle cx="13" cy="23.5" r="1.1" fill="#402010"/></svg>
<svg class="a" style="left:24px;top:699px" width="18" height="16" viewBox="0 0 18 16"><path d="M5 2.5H16.5V12.5H5Z" fill="#f8f4ec" stroke="#c89860" stroke-width="0.9"/><path d="M16.5 3V13" stroke="#b07838" stroke-width="1.3"/>
<rect x="6" y="4" width="9" height="2" fill="#444"/><path d="M6 8H15M6 10H14" stroke="#bbb" stroke-width="0.7"/>
<path d="M3.5 8L5 10L6.5 8L6 12L7.5 14.5H1Q1 11.5 3 11Z" fill="#f0a010" stroke="#a01a08" stroke-width="0.6"/></svg>
<svg class="a" style="left:44px;top:700px" width="17" height="15" viewBox="0 0 17 15"><path d="M1.5 2.5H14.5V13H1.5Z" fill="#fcf4ec" stroke="#d09858" stroke-width="0.9"/><path d="M14.5 3V13.5" stroke="#b07838" stroke-width="1.3"/>
<path d="M5 4.5L7 6L5.5 8L8 9.5L7 11L9 12" stroke="#e01818" stroke-width="1.4" fill="none"/></svg>
<svg class="a" style="left:64px;top:700px" width="17" height="15" viewBox="0 0 17 15"><path d="M4.5 2.5H15.5V12.5H4.5Z" fill="#f8f4ec" stroke="#c89860" stroke-width="0.9"/><path d="M15.5 3V13" stroke="#b07838" stroke-width="1.3"/>
<rect x="6" y="3.5" width="7" height="1.4" fill="#333"/><path d="M9 8L11 10L13 7.5" stroke="#f08a50" stroke-width="0.9" fill="none"/>
<path d="M0.5 13Q0.5 7.5 4 7.5Q7.5 7.5 7.5 13Z" fill="#f0b010" stroke="#101030" stroke-width="1"/></svg>
<svg class="a" style="left:84px;top:699px" width="16" height="17" viewBox="0 0 16 17"><path d="M1.5 2L14 0.8V14L2 15.5Z" fill="#a82020" stroke="#7a1010" stroke-width="0.8"/><path d="M2 15.5L14 14V15.5L2.5 16.5Z" fill="#e8d8b0"/>
<path d="M3 6H5.5M3 8H5.5" stroke="#fff" stroke-width="1"/>
<path d="M7 11L9 6L10 9L12 4.5" stroke="#f0d060" stroke-width="1.4" fill="none"/></svg>
<svg class="a" style="left:104px;top:700px" width="17" height="16" viewBox="0 0 17 16"><rect x="1.5" y="1.5" width="14" height="12.5" fill="#fcfaf6" stroke="#c8a070" stroke-width="0.9"/>
<rect x="3" y="2.5" width="10" height="1.3" fill="#333"/><path d="M3 6H13" stroke="#ccc" stroke-width="0.7"/>
<path d="M4 9L6 10L4 11M9 9L11 10L9 11" stroke="#e06080" stroke-width="1" fill="none"/>
<path d="M1 1H3M14 1H16M1 14V15.5M16 14V15.5" stroke="#222" stroke-width="1.2"/></svg>
<svg class="a" style="left:124px;top:700px" width="17" height="15" viewBox="0 0 17 15"><path d="M1.5 2.5H14.5V12.5H1.5Z" fill="#f6f0e6" stroke="#c89860" stroke-width="0.9"/><path d="M14.5 3V13" stroke="#b07838" stroke-width="1.3"/>
<rect x="3" y="5" width="10" height="1.5" fill="#555"/>
<rect x="6" y="9" width="1.3" height="3" fill="#4090e0"/><rect x="8" y="8.5" width="1.3" height="3.5" fill="#30b030"/><rect x="10" y="8" width="1.3" height="4" fill="#20b040"/><rect x="12" y="7" width="1.3" height="5" fill="#e02020"/></svg>
<svg class="a" style="left:143px;top:698px" width="18" height="18" viewBox="0 0 18 18"><g fill="#f0c030" stroke="#c89010" stroke-width="0.7"><ellipse cx="9" cy="14.5" rx="7" ry="2.5"/><ellipse cx="10" cy="11" rx="6.5" ry="2.5"/><ellipse cx="9.5" cy="7.5" rx="6" ry="2.3"/><ellipse cx="8.5" cy="3.5" rx="5" ry="2.2"/></g>
<circle cx="4.5" cy="10.5" r="2.2" fill="#f4d0b0" stroke="#8a4a20" stroke-width="0.6"/><path d="M0.5 17Q0.5 12.5 4.5 12.5Q8 12.5 8 17Z" fill="#d84040"/></svg>
<svg class="a" style="left:167px;top:700px" width="9" height="14" viewBox="0 0 9 14"><path d="M1 1L4 3.5L1 6M4.5 1L7.5 3.5L4.5 6" stroke="#000" stroke-width="1.3" fill="none"/><path d="M1.5 10H7.5L4.5 13Z" fill="#000"/></svg>
<svg class="a" style="left:5px;top:728px" width="14" height="16" viewBox="0 0 14 16"><path d="M2 2.5L11 3.5V14L2 13Z" fill="#a8a0e0" stroke="#7468b0" stroke-width="1"/>
<path d="M3 4.5H10M6 4V8M7 8H10M7 10H10" stroke="#e8e8ff" stroke-width="1"/>
<circle cx="11" cy="10" r="0.8" fill="#f0c000"/>
<circle cx="5.5" cy="11" r="4.3" fill="#28a828"/><path d="M3.5 10.5L5.3 12.6L7.8 9.2" stroke="#fff" stroke-width="1.6" fill="none"/></svg>
<svg class="a" style="left:196px;top:728px" width="14" height="17" viewBox="0 0 14 17"><path d="M1.5 3Q1.5 1.5 7 1.5Q12.5 1.5 12.5 3V14Q12.5 15.5 7 15.5Q1.5 15.5 1.5 14Z" fill="#fcf090" stroke="#dca000" stroke-width="1.1"/>
<path d="M2 8.5Q7 9.8 12 8.5" stroke="#e8c040" stroke-width="1" fill="none"/></svg>
<svg class="a" style="left:380px;top:728px" width="14" height="17" viewBox="0 0 14 17"><ellipse cx="7" cy="12" rx="5.8" ry="3.8" fill="#a8d4f8" stroke="#3a98e8" stroke-width="1"/>
<path d="M7.5 8.5V15" stroke="#3a98e8" stroke-width="1.2"/>
<ellipse cx="8" cy="5.5" rx="2.6" ry="3.5" fill="#f8c010"/><path d="M5 5Q5 1.5 8 1.5Q11 1.5 10.5 3.5Q8 2.5 6.5 6.5Z" fill="#202020"/></svg>
<!--/ICONS-->
</div>
</body></html>
